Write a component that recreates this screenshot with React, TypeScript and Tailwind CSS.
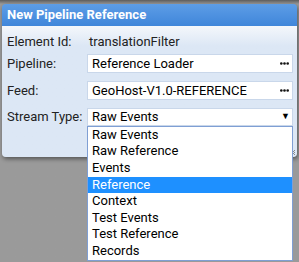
import React from 'react'

const options = ['Raw Events', 'Raw Reference', 'Events', 'Reference', 'Context', 'Test Events', 'Test Reference', 'Records']

function Dots() {
  return (
    <svg width="9" height="3" viewBox="0 0 9 3">
      <circle cx="1.3" cy="1.5" r="1.3" fill="#111" />
      <circle cx="4.5" cy="1.5" r="1.3" fill="#111" />
      <circle cx="7.7" cy="1.5" r="1.3" fill="#111" />
    </svg>
  )
}

function TextBox({ value }: { value: string }) {
  return (
    <div className="flex h-[19px] items-center justify-between border border-[#c9d7ea] bg-white pl-[4px] pr-[3px] text-black">
      <span className="truncate">{value}</span>
      <Dots />
    </div>
  )
}

export default function App() {
  return (
    <div className="h-[262px] w-[299px] overflow-hidden bg-gradient-to-b from-[#5c5c5c] via-[#9a9a9a] via-[4px] to-[#9a9a9a] pl-[2px] pt-[4px]" style={{ fontFamily: 'Roboto, "Liberation Sans", sans-serif' }}>
      <div className="relative w-[295px] rounded-[4px] shadow-[1px_2px_4px_rgba(0,0,0,0.45)]">
        <div className="flex h-[22px] items-center rounded-t-[4px] bg-gradient-to-b from-[#5d9de6] to-[#3f86da] pl-[5px] text-[13px] font-bold text-white">
          New Pipeline Reference
        </div>
        <div className="h-[131px] rounded-b-[4px] bg-gradient-to-b from-[#f4f7fb] to-[#dce7f5] to-[20px] pl-[5px] pr-[4px] pt-[8px] text-[13px] text-[#222]">
          <div className="flex h-[15px] items-center">
            <span className="w-[82px]">Element Id:</span>
            <span>translationFilter</span>
          </div>
          <div className="mt-[5px] grid grid-cols-[80px_1fr] items-center">
            <span>Pipeline:</span>
            <TextBox value="Reference Loader" />
          </div>
          <div className="mt-[7px] grid grid-cols-[80px_1fr] items-center">
            <span>Feed:</span>
            <TextBox value="GeoHost-V1.0-REFERENCE" />
          </div>
          <div className="mt-[7px] grid grid-cols-[80px_1fr] items-center">
            <span>Stream Type:</span>
            <div className="relative">
              <div className="flex h-[18px] items-center justify-between border border-[#c9d7ea] bg-white pl-[4px] pr-[2px] text-black">
                <span>Raw Events</span>
                <span className="text-[9px] leading-none">▼</span>
              </div>
              <ul className="absolute left-0 top-[18px] z-10 w-full border border-[#7f9fd4] bg-white text-black">
                {options.map((o) => (
                  <li key={o} className={`h-[16.6px] pl-[4px] leading-[16.6px] ${o === 'Reference' ? 'bg-[#1e90ff] text-white' : ''}`}>
                    {o}
                  </li>
                ))}
              </ul>
            </div>
          </div>
        </div>
        <svg className="absolute bottom-[1px] right-[1px]" width="7" height="7" viewBox="0 0 7 7">
          <path d="M6 1L1 6M6 3L3 6M6 5L5 6" stroke="#8a8a8a" strokeWidth="1" />
        </svg>
      </div>
    </div>
  )
}
